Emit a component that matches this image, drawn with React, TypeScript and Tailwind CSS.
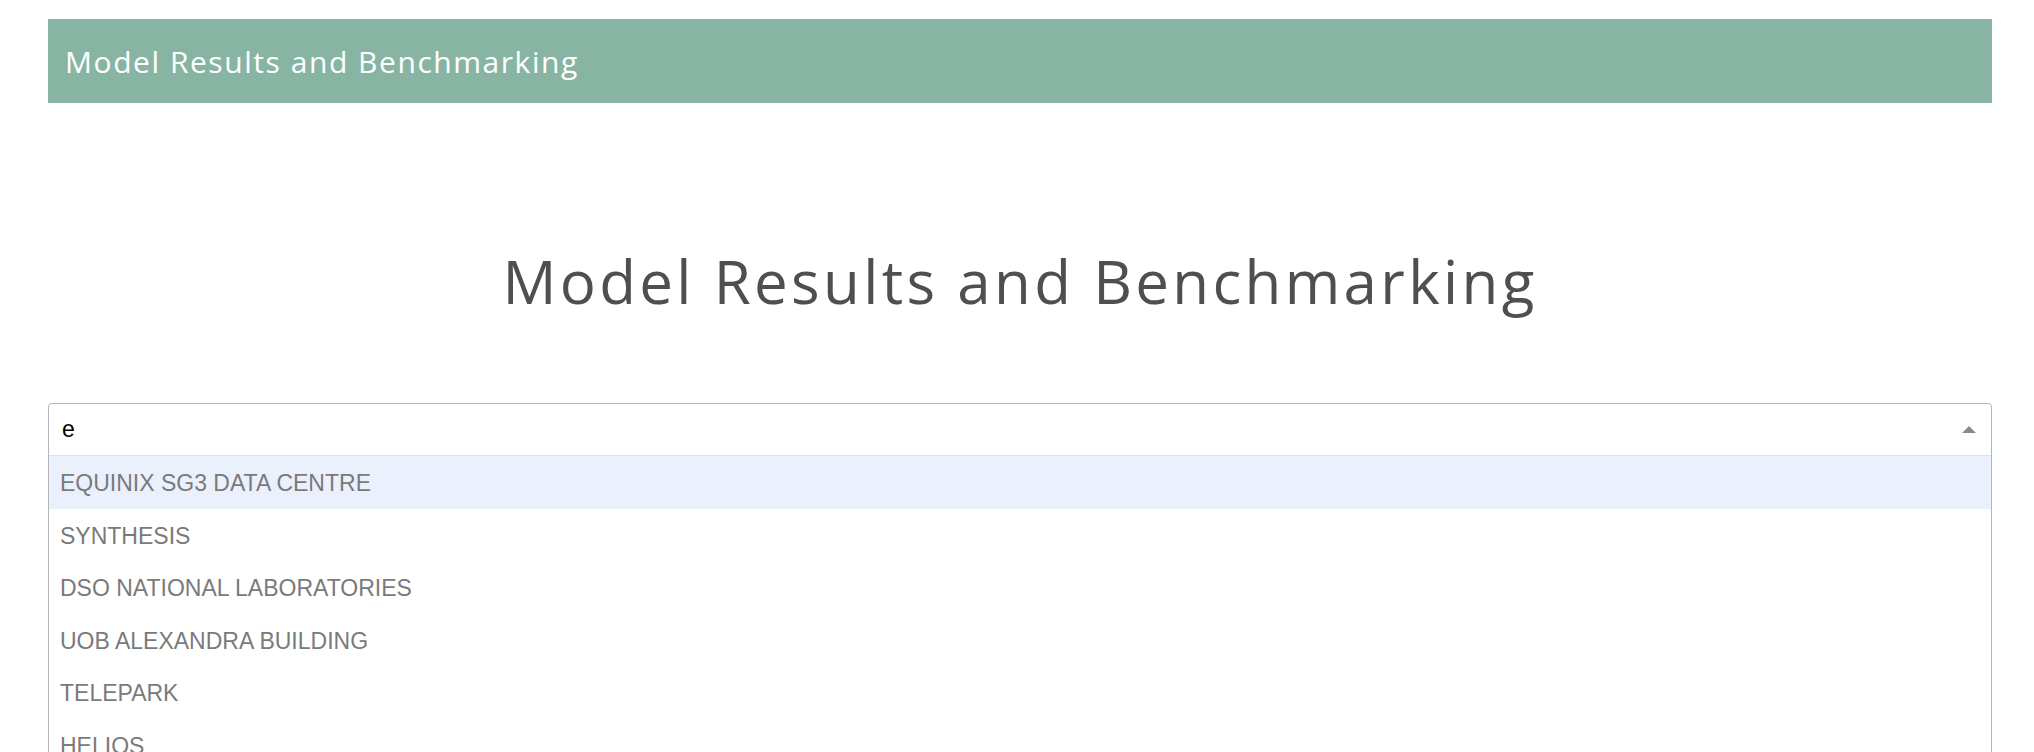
import React from "react";

const options = [
  "EQUINIX SG3 DATA CENTRE",
  "SYNTHESIS",
  "DSO NATIONAL LABORATORIES",
  "UOB ALEXANDRA BUILDING",
  "TELEPARK",
  "HELIOS",
];

export default function App() {
  return (
    <div className="h-[752px] overflow-hidden bg-white pl-[48px] pr-[42px] pt-[19px]">
      <div className="flex h-[84px] items-center bg-[#88b5a3] pl-[17px]">
        <span
          className="text-[30px] tracking-[1.55px] text-white"
          style={{ fontFamily: '"Open Sans", sans-serif' }}
        >
          Model Results and Benchmarking
        </span>
      </div>

      <h1
        className="mt-[142px] h-[72px] text-center text-[60px] font-medium leading-[72px] tracking-[3.35px] text-[#4f4f4f]"
        style={{ fontFamily: '"Open Sans", sans-serif' }}
      >
        Model Results and Benchmarking
      </h1>

      <div
        className="mt-[86px] rounded-t-[4px] border border-[#b5b5b5]"
        style={{ fontFamily: '"Liberation Sans", Arial, sans-serif' }}
      >
        <div className="flex h-[52px] items-center justify-between border-b border-[#e0e0e0] pl-[13px] pr-[15px]">
          <span className="text-[23px] text-black">e</span>
          <svg width="14" height="7" viewBox="0 0 14 7" className="block">
            <path d="M0 7 L7 0 L14 7 Z" fill="#8a8a8a" />
          </svg>
        </div>
        <div className="flex flex-col">
          {options.map((o, i) => (
            <div
              key={o}
              className={
                "flex h-[52.5px] shrink-0 items-center pl-[11px] pt-[2px] text-[23px] text-[#7a7a7a] " +
                (i === 0 ? "bg-[#ebf0fd]" : "bg-white")
              }
            >
              {o}
            </div>
          ))}
        </div>
      </div>
    </div>
  );
}
